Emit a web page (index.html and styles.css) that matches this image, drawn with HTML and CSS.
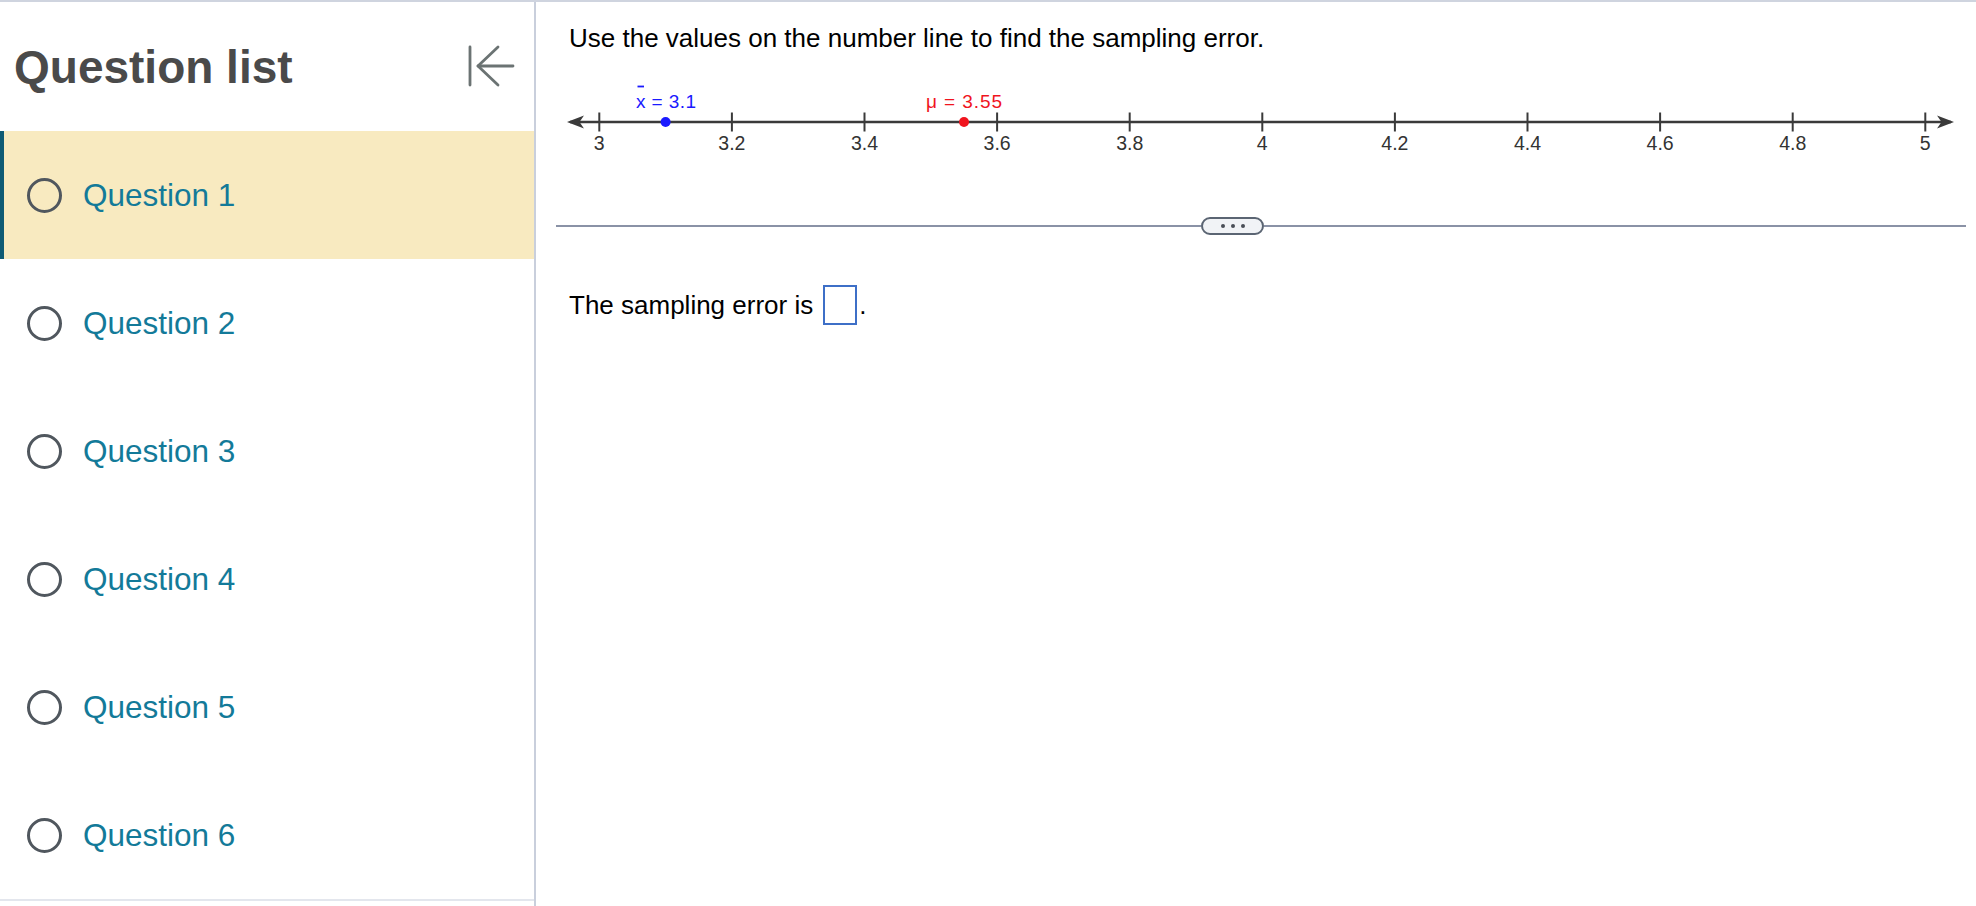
FILE: index.html
```html
<!DOCTYPE html>
<html lang="en">
<head>
  <meta charset="UTF-8" />
  <title>Question list</title>
  <link rel="stylesheet" href="styles.css">
</head>
<body>

<aside class="sidebar">
  <div class="sidebar-head">
    <h1>Question list</h1>
    <button class="collapse" aria-label="Collapse question list">
      <svg width="48" height="44" viewBox="0 0 48 44">
        <g fill="none" stroke="#6b7373" stroke-width="2.8" stroke-linecap="round" stroke-linejoin="round">
          <line x1="3" y1="3" x2="3" y2="41" />
          <line x1="11" y1="22" x2="46" y2="22" />
          <polyline points="31,3 11,22 31,41" />
        </g>
      </svg>
    </button>
  </div>
  <ul class="questions">
    <li class="question active"><span class="radio"></span>Question 1</li>
    <li class="question"><span class="radio"></span>Question 2</li>
    <li class="question"><span class="radio"></span>Question 3</li>
    <li class="question"><span class="radio"></span>Question 4</li>
    <li class="question"><span class="radio"></span>Question 5</li>
    <li class="question"><span class="radio"></span>Question 6</li>
  </ul>
</aside>

<main class="content">
  <p class="prompt">Use the values on the number line to find the sampling error.</p>

  <svg class="number-line" width="1410" height="80" viewBox="0 0 1410 80">
    <!-- axis -->
    <line x1="14" y1="43" x2="1395" y2="43" stroke="#3a3a3a" stroke-width="2.6" />
    <polygon points="11,43 28,36.5 23.5,43 28,49.5" fill="#3a3a3a" />
    <polygon points="1398,43 1381,36.5 1385.5,43 1381,49.5" fill="#3a3a3a" />

    <!-- ticks -->
    <g stroke="#3a3a3a" stroke-width="2">
      <line x1="43.3" y1="33.5" x2="43.3" y2="52.5" />
      <line x1="175.9" y1="33.5" x2="175.9" y2="52.5" />
      <line x1="308.5" y1="33.5" x2="308.5" y2="52.5" />
      <line x1="441.1" y1="33.5" x2="441.1" y2="52.5" />
      <line x1="573.7" y1="33.5" x2="573.7" y2="52.5" />
      <line x1="706.3" y1="33.5" x2="706.3" y2="52.5" />
      <line x1="838.9" y1="33.5" x2="838.9" y2="52.5" />
      <line x1="971.5" y1="33.5" x2="971.5" y2="52.5" />
      <line x1="1104.1" y1="33.5" x2="1104.1" y2="52.5" />
      <line x1="1236.7" y1="33.5" x2="1236.7" y2="52.5" />
      <line x1="1369.3" y1="33.5" x2="1369.3" y2="52.5" />
    </g>

    <g class="tick-labels" text-anchor="middle">
      <text x="43.3" y="71">3</text>
      <text x="175.9" y="71">3.2</text>
      <text x="308.5" y="71">3.4</text>
      <text x="441.1" y="71">3.6</text>
      <text x="573.7" y="71">3.8</text>
      <text x="706.3" y="71">4</text>
      <text x="838.9" y="71">4.2</text>
      <text x="971.5" y="71">4.4</text>
      <text x="1104.1" y="71">4.6</text>
      <text x="1236.7" y="71">4.8</text>
      <text x="1369.3" y="71">5</text>
    </g>

    <!-- sample mean -->
    <circle cx="109.6" cy="43" r="5" fill="#1a1aff" />
    <line x1="81.5" y1="7.5" x2="88" y2="7.5" stroke="#1a1aff" stroke-width="1.8" />
    <text class="point-label" x="80" y="28.7" fill="#1a1aff" textLength="60" lengthAdjust="spacing">x = 3.1</text>

    <!-- population mean -->
    <circle cx="408" cy="43" r="5" fill="#f0141e" />
    <text class="point-label" x="370" y="28.7" fill="#f0141e" textLength="76" lengthAdjust="spacing">μ = 3.55</text>
  </svg>

  <div class="divider">
    <span class="rule rule-left"></span>
    <button class="expand" aria-label="Show more"><i></i><i></i><i></i></button>
    <span class="rule"></span>
  </div>

  <p class="answer">The sampling error is<span class="answer-box"></span>.</p>
</main>

</body>
</html>
```

FILE: styles.css
```css
* {
  margin: 0;
  padding: 0;
  box-sizing: border-box;
}
body {
  display: flex;
  height: 906px;
  border-top: 2px solid #cfd4df;
  background: #fff;
  font-family: "Liberation Sans", Arial, sans-serif;
  color: #000;
  overflow: hidden;
}

/* sidebar */
.sidebar {
  flex: 0 0 536px;
  border-right: 2px solid #c9cfdc;
}
.sidebar-head {
  height: 129px;
  display: flex;
  align-items: center;
  justify-content: space-between;
  padding: 0 19px 0 14px;
}
.sidebar-head h1 {
  font-size: 46px;
  font-weight: bold;
  color: #4a4a4a;
}
.collapse {
  border: none;
  background: none;
  display: flex;
  margin-top: -2px;
}
.questions {
  list-style: none;
  border-bottom: 2px solid #e3e6ed;
}
.question {
  height: 128px;
  display: flex;
  align-items: center;
  gap: 21px;
  padding-left: 23px;
  border-left: 4px solid transparent;
  font-size: 31.5px;
  color: #137a99;
}
.question.active {
  background: #f8eac0;
  border-left-color: #0f5b74;
}
.radio {
  width: 35px;
  height: 35px;
  border: 3px solid #50575e;
  border-radius: 50%;
}

/* main */
.content {
  flex: 1;
  padding: 21px 10px 0 20px;
}
.prompt {
  font-size: 26px;
  padding-left: 13px;
}
.number-line {
  display: block;
  margin-top: 25px;
}
.tick-labels {
  font-size: 19.5px;
  fill: #333;
}
.point-label {
  font-size: 19px;
}
.divider {
  display: flex;
  align-items: center;
  margin-top: 58px;
  height: 18px;
}
.rule {
  flex: 1;
  height: 2px;
  background: #8a92a6;
}
.rule-left {
  flex: 0 0 645px;
}
.expand {
  width: 63px;
  height: 18px;
  border: 2px solid #5b6573;
  border-radius: 9px;
  background: #f1f3f6;
  display: flex;
  align-items: center;
  justify-content: center;
  gap: 6px;
}
.expand i {
  width: 4px;
  height: 4px;
  border-radius: 50%;
  background: #4a4f57;
}
.answer {
  display: flex;
  align-items: center;
  height: 40px;
  margin-top: 50px;
  padding-left: 13px;
  font-size: 26px;
}
.answer-box {
  width: 34px;
  height: 40px;
  border: 2px solid #3d6fc7;
  margin: 0 2px 0 10px;
}
```
